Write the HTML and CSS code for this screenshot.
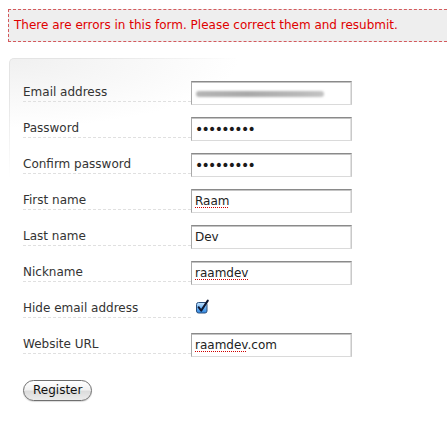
FILE: index.html
```html
<!DOCTYPE html>
<html lang="en">
<head>
<meta charset="utf-8">
<title>Register</title>
<link rel="stylesheet" href="styles.css">
</head>
<body>
<div class="page">
  <div class="errors">There are errors in this form. Please correct them and resubmit.</div>
  <form class="panel" onsubmit="return false">
    <div class="row">
      <label class="label">Email address</label>
      <div class="field"><span class="blur"></span></div>
    </div>
    <div class="row">
      <label class="label">Password</label>
      <div class="field pw">•••••••••</div>
    </div>
    <div class="row">
      <label class="label">Confirm password</label>
      <div class="field pw">•••••••••</div>
    </div>
    <div class="row">
      <label class="label">First name</label>
      <div class="field"><span class="spell">Raam</span></div>
    </div>
    <div class="row">
      <label class="label">Last name</label>
      <div class="field">Dev</div>
    </div>
    <div class="row">
      <label class="label">Nickname</label>
      <div class="field"><span class="spell">raamdev</span></div>
    </div>
    <div class="row">
      <label class="label">Hide email address</label>
      <div class="check">
        <svg width="15" height="15" viewBox="0 0 15 15">
          <defs>
            <linearGradient id="cb" x1="0" y1="0" x2="0" y2="1">
              <stop offset="0" stop-color="#c9e6ff"/>
              <stop offset="0.5" stop-color="#6fb4f5"/>
              <stop offset="1" stop-color="#2f86e0"/>
            </linearGradient>
          </defs>
          <rect x="1.5" y="3.5" width="10.5" height="10.5" rx="2" fill="url(#cb)" stroke="#2a4f7c" stroke-width="1"/>
          <path d="M3.6 8.2 L6.2 11.6 L12.8 1.6" fill="none" stroke="#0d1630" stroke-width="2" stroke-linecap="round" stroke-linejoin="round"/>
        </svg>
      </div>
    </div>
    <div class="row">
      <label class="label">Website URL</label>
      <div class="field"><span class="spell">raamdev</span>.com</div>
    </div>
    <div class="actions">
      <button class="btn" type="submit">Register</button>
    </div>
  </form>
</div>
</body>
</html>
```

FILE: styles.css
```css
html, body {
  margin: 0;
  padding: 0;
  background: #fff;
}
body {
  font-family: "DejaVu Sans", Verdana, sans-serif;
  font-size: 12px;
  line-height: 15px;
  color: #333;
  overflow: hidden;
}
.page {
  padding: 9px 0 0 8px;
}
.errors {
  background: #eeeeee;
  border: 1px dashed #d4595c;
  border-right: none;
  color: #e00000;
  padding: 8px 5px 8px 5px;
  height: 15px;
}
.panel {
  position: relative;
  margin: 16px 0 0 1px;
  padding: 23px 0 20px 14px;
  border-radius: 5px 0 0 0;
  background: radial-gradient(ellipse 230px 70px at 0 0, #f0f0f0, rgba(255,255,255,0));
}
.panel::before {
  content: "";
  position: absolute;
  left: 0;
  top: 0;
  width: 260px;
  height: 130px;
  border-top: 1px solid #e4e4e4;
  border-left: 1px solid #e4e4e4;
  border-radius: 5px 0 0 0;
  -webkit-mask-image: radial-gradient(ellipse 230px 120px at 0 0, #000 30%, transparent 100%);
  mask-image: radial-gradient(ellipse 230px 120px at 0 0, #000 30%, transparent 100%);
  pointer-events: none;
}
.row {
  position: relative;
  display: flex;
  align-items: flex-start;
  height: 24px;
  margin-bottom: 12px;
}
.label {
  width: 168px;
  box-sizing: border-box;
  padding: 4px 0 1px 0;
  border-bottom: 1px dashed #e0e0e0;
  color: #333;
}
.field {
  width: 161px;
  height: 24px;
  box-sizing: border-box;
  padding: 4px 3px 0 3px;
  border: 1px solid;
  border-color: #8a8a8a #c9c9c9 #dadada #a8a8a8;
  box-shadow: inset 0 1px 0 #c4c4c4, inset -1px 0 0 #e2e2e2;
  background: #fff;
  color: #222;
  white-space: nowrap;
  overflow: hidden;
}
.field.pw {
  font-size: 14px;
  line-height: 15px;
  letter-spacing: -1.7px;
  padding-top: 4px;
  color: #1a1a1a;
}
.spell {
  text-decoration: underline dotted #d00000;
  text-underline-offset: 2px;
  text-decoration-thickness: 1px;
}
.blur {
  display: block;
  margin: 5px 0 0 1px;
  width: 128px;
  height: 6px;
  border-radius: 3px;
  background: linear-gradient(to right, #b5b5b5, #a9a9a9 40%, #b8b8b8 80%, #c4c4c4);
  filter: blur(1.2px);
}
.check {
  padding: 2px 0 0 4px;
  height: 24px;
  box-sizing: border-box;
}
.check svg {
  display: block;
}
.actions {
  margin-top: 23px;
}
.btn {
  font-family: "DejaVu Sans", Verdana, sans-serif;
  font-size: 12px;
  line-height: 15px;
  color: #111;
  height: 21px;
  padding: 2px 9px;
  margin: 0;
  border: 1px solid #6f6f6f;
  border-radius: 11px;
  background: linear-gradient(to bottom, #ffffff 0%, #f2f2f2 45%, #dcdcdc 55%, #ececec 100%);
  box-shadow: 0 1px 1px rgba(0,0,0,0.15);
}
```
